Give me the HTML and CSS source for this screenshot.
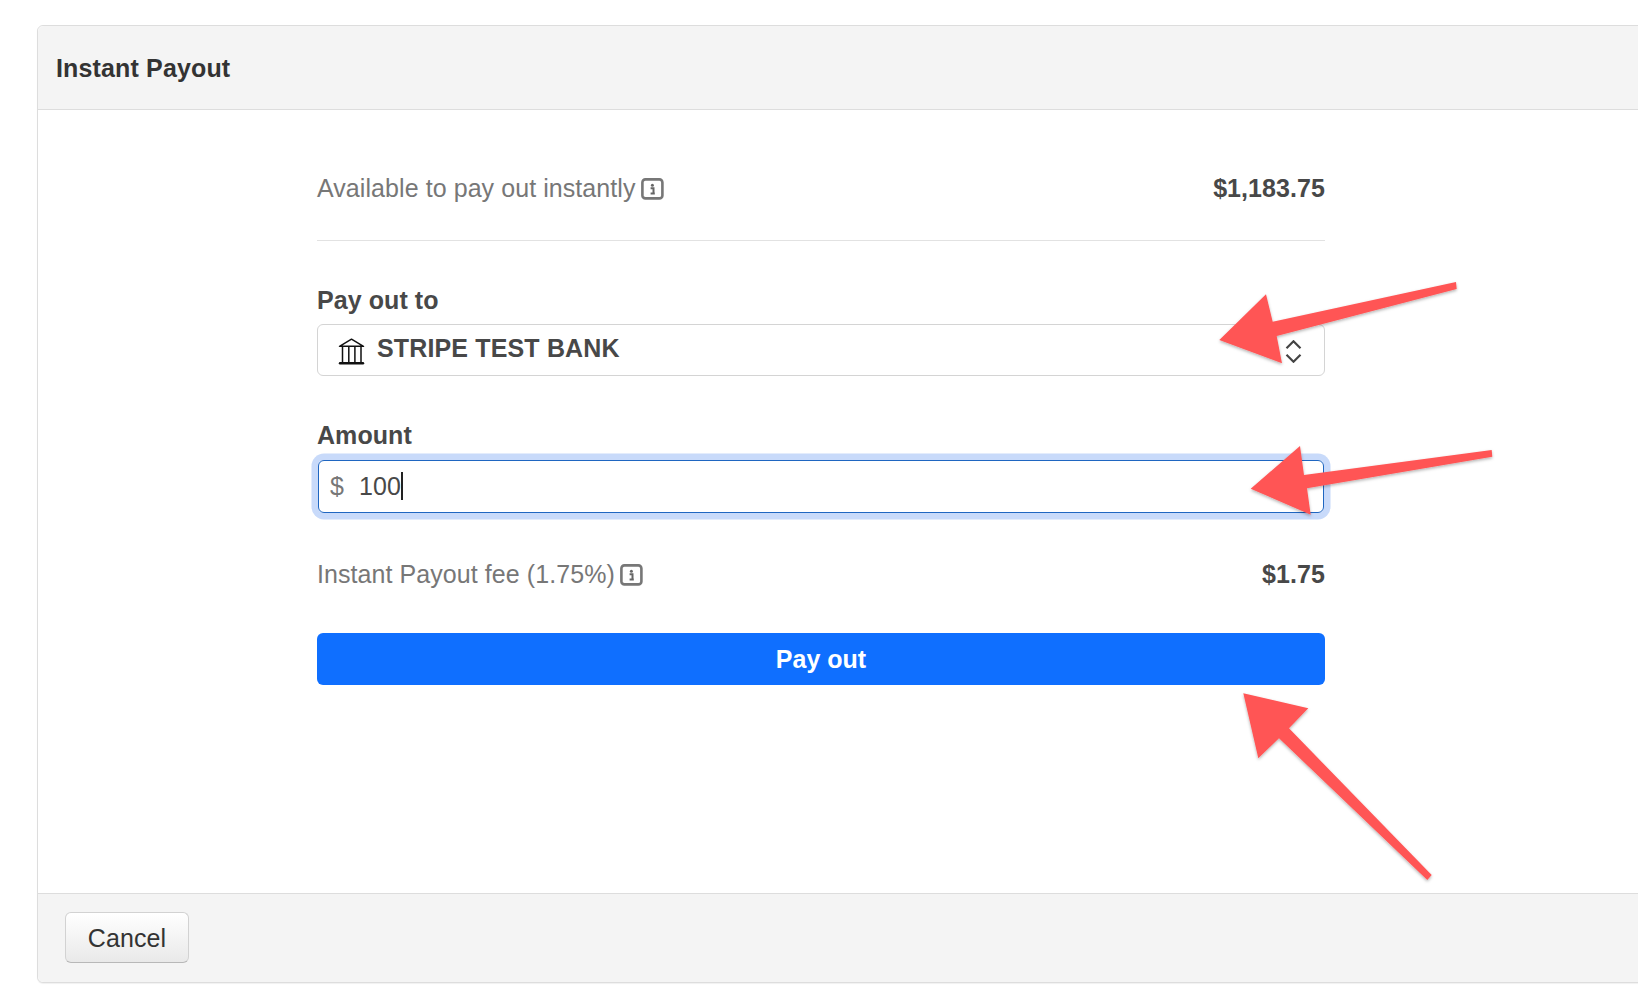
FILE: index.html
```html
<!DOCTYPE html>
<html lang="en">
<head>
<meta charset="utf-8">
<title>Instant Payout</title>
<link rel="stylesheet" href="styles.css">
</head>
<body>
<main class="panel">
  <header class="panel-head"><h1 class="title">Instant Payout</h1></header>
  <section class="panel-body">
    <div class="form">
      <div class="row row-first">
        <span class="row-label">Available to pay out instantly
          <svg class="info" width="23" height="22" viewBox="0 0 23 22"><rect x="1.400" y="1.400" width="20" height="19" rx="3" fill="none" stroke="#777" stroke-width="2.600"/><circle cx="11.400" cy="7.300" r="1.500" fill="#666"/><path d="M9.600 10.300h2.900v5.300M9.600 15.600h4.200" fill="none" stroke="#666" stroke-width="2"/></svg>
        </span>
        <strong class="row-value">$1,183.75</strong>
      </div>
      <label class="field-label field-label-first">Pay out to</label>
      <div class="select">
        <svg class="bank" width="27" height="27" viewBox="0 0 27 27"><path d="M1.500 8.300 13.500 1.200l12 7.100zM4.500 8.300v15.700M10.800 8.300v15.700M16.900 8.300v15.700M23 8.300v15.700" fill="none" stroke="#111" stroke-width="1.500" stroke-linejoin="round"/><path d="M2 25.300h23" fill="none" stroke="#111" stroke-width="2.400" stroke-linecap="round"/></svg>
        <span class="select-text">STRIPE TEST BANK</span>
        <svg class="updown" width="17" height="23" viewBox="0 0 17 23"><path d="M1.500 8.300 8.500 1.300l7 7M1.500 14.700l7 7 7-7" fill="none" stroke="#444" stroke-width="2.200"/></svg>
      </div>
      <label class="field-label">Amount</label>
      <div class="amount">
        <span class="currency">$</span>
        <span class="amount-value">100</span><span class="caret"></span>
      </div>
      <div class="row row-fee">
        <span class="row-label">Instant Payout fee (1.75%)
          <svg class="info" width="23" height="22" viewBox="0 0 23 22"><rect x="1.400" y="1.400" width="20" height="19" rx="3" fill="none" stroke="#777" stroke-width="2.600"/><circle cx="11.400" cy="7.300" r="1.500" fill="#666"/><path d="M9.600 10.300h2.900v5.300M9.600 15.600h4.200" fill="none" stroke="#666" stroke-width="2"/></svg>
        </span>
        <strong class="row-value">$1.75</strong>
      </div>
      <button class="pay" type="button">Pay out</button>
    </div>
  </section>
  <footer class="panel-foot"><button class="cancel" type="button">Cancel</button></footer>
</main>
<svg class="arrows" width="1638" height="992" viewBox="0 0 1638 992">
  <defs><filter id="arrow-shadow" x="-10%" y="-10%" width="120%" height="120%"><feDropShadow dx="0" dy="1.500" stdDeviation="1.500" flood-color="#000" flood-opacity=".3"/></filter></defs>
  <g fill="#ff5555" filter="url(#arrow-shadow)">
    <polygon points="1456,282 1456.700,289 1276.700,336 1282,363.300 1219.300,340 1266,294.300 1272.700,321.700"/>
    <polygon points="1491.700,450 1492.300,456.700 1307,488.300 1310.700,514.700 1250.700,488.700 1300,446 1304,475"/>
    <polygon points="1431.700,875 1427.300,880 1279,738.300 1258.300,758.300 1243.300,693.300 1308.300,708.300 1289,728.300"/>
  </g>
</svg>
</body>
</html>
```
FILE: styles.css
```css
html, body {
  margin: 0;
  height: 992px;
  overflow: hidden;
  background: #fff;
}
body {
  box-sizing: border-box;
  padding: 25px 0 0 37px;
  font-family: "Liberation Sans", Arial, sans-serif;
  font-size: 25px;
  line-height: 30px;
  letter-spacing: .07px;
  color: #444;
}
.panel {
  box-sizing: border-box;
  display: flex;
  flex-direction: column;
  width: 1640px;
  height: 958px;
  border: 1px solid #ddd;
  border-radius: 6px;
  background: #fff;
  box-shadow: 0 1px 1px rgba(0, 0, 0, .06);
}
.panel-head {
  box-sizing: border-box;
  display: flex;
  align-items: center;
  height: 84px;
  padding-left: 18px;
  background: #f4f4f4;
  border-bottom: 1px solid #ddd;
  border-radius: 6px 6px 0 0;
}
.title {
  margin: 0;
  font-size: 25px;
  font-weight: 700;
  letter-spacing: .15px;
  color: #333;
}
.panel-body {
  flex: 1;
  padding: 63px 0 0 279px;
}
.form {
  display: flex;
  flex-direction: column;
  width: 1008px;
}
.row {
  display: flex;
  justify-content: space-between;
  align-items: center;
}
.row-first {
  padding-bottom: 37px;
  border-bottom: 1px solid #e2e2e2;
}
.row-fee {
  margin-top: 46px;
}
.row-label {
  display: flex;
  align-items: center;
  gap: 5px;
  color: #777;
}
.row-value {
  color: #484848;
}
.info {
  margin-top: 2px;
}
.field-label {
  margin-top: 44px;
  margin-bottom: 9px;
  font-weight: 700;
  color: #484848;
}
.select {
  box-sizing: border-box;
  display: flex;
  align-items: center;
  height: 52px;
  padding: 0 22px 0 20px;
  border: 1px solid #d4d4d4;
  border-radius: 6px;
}
.bank {
  margin: 2px 12px 0 0;
}
.select-text {
  flex: 1;
  margin-top: -4px;
  font-weight: 700;
  letter-spacing: .15px;
  color: #484848;
}
.updown {
  margin-top: 2px;
}
.amount {
  box-sizing: border-box;
  display: flex;
  align-items: center;
  height: 53px;
  margin: 1px 1px 0;
  padding: 0 0 2px 11px;
  border: 1px solid #1f66c1;
  border-radius: 6px;
  box-shadow: 0 0 0 6.500px #c8dafa;
}
.currency {
  margin-right: 15px;
  color: #777;
}
.amount-value {
  color: #484848;
}
.caret {
  width: 2px;
  height: 28px;
  background: #222;
}
.pay {
  height: 52px;
  margin-top: 44px;
  padding: 0;
  border: 0;
  border-radius: 6px;
  background: #0f6fff;
  color: #fff;
  font: 700 25px/30px "Liberation Sans", Arial, sans-serif;
}
.panel-foot {
  box-sizing: border-box;
  height: 89px;
  padding: 18px 0 0 27px;
  background: #f4f4f4;
  border-top: 1px solid #ddd;
  border-radius: 0 0 6px 6px;
}
.cancel {
  display: block;
  width: 124px;
  height: 51px;
  padding: 0;
  border: 1px solid #d2d2d2;
  border-bottom-color: #b8b8b8;
  border-radius: 6px;
  background: linear-gradient(#fff, #e9e9e9);
  color: #333;
  letter-spacing: .1px;
  font: 25px/30px "Liberation Sans", Arial, sans-serif;
}
.arrows {
  position: absolute;
  left: 0;
  top: 0;
  pointer-events: none;
}
```
